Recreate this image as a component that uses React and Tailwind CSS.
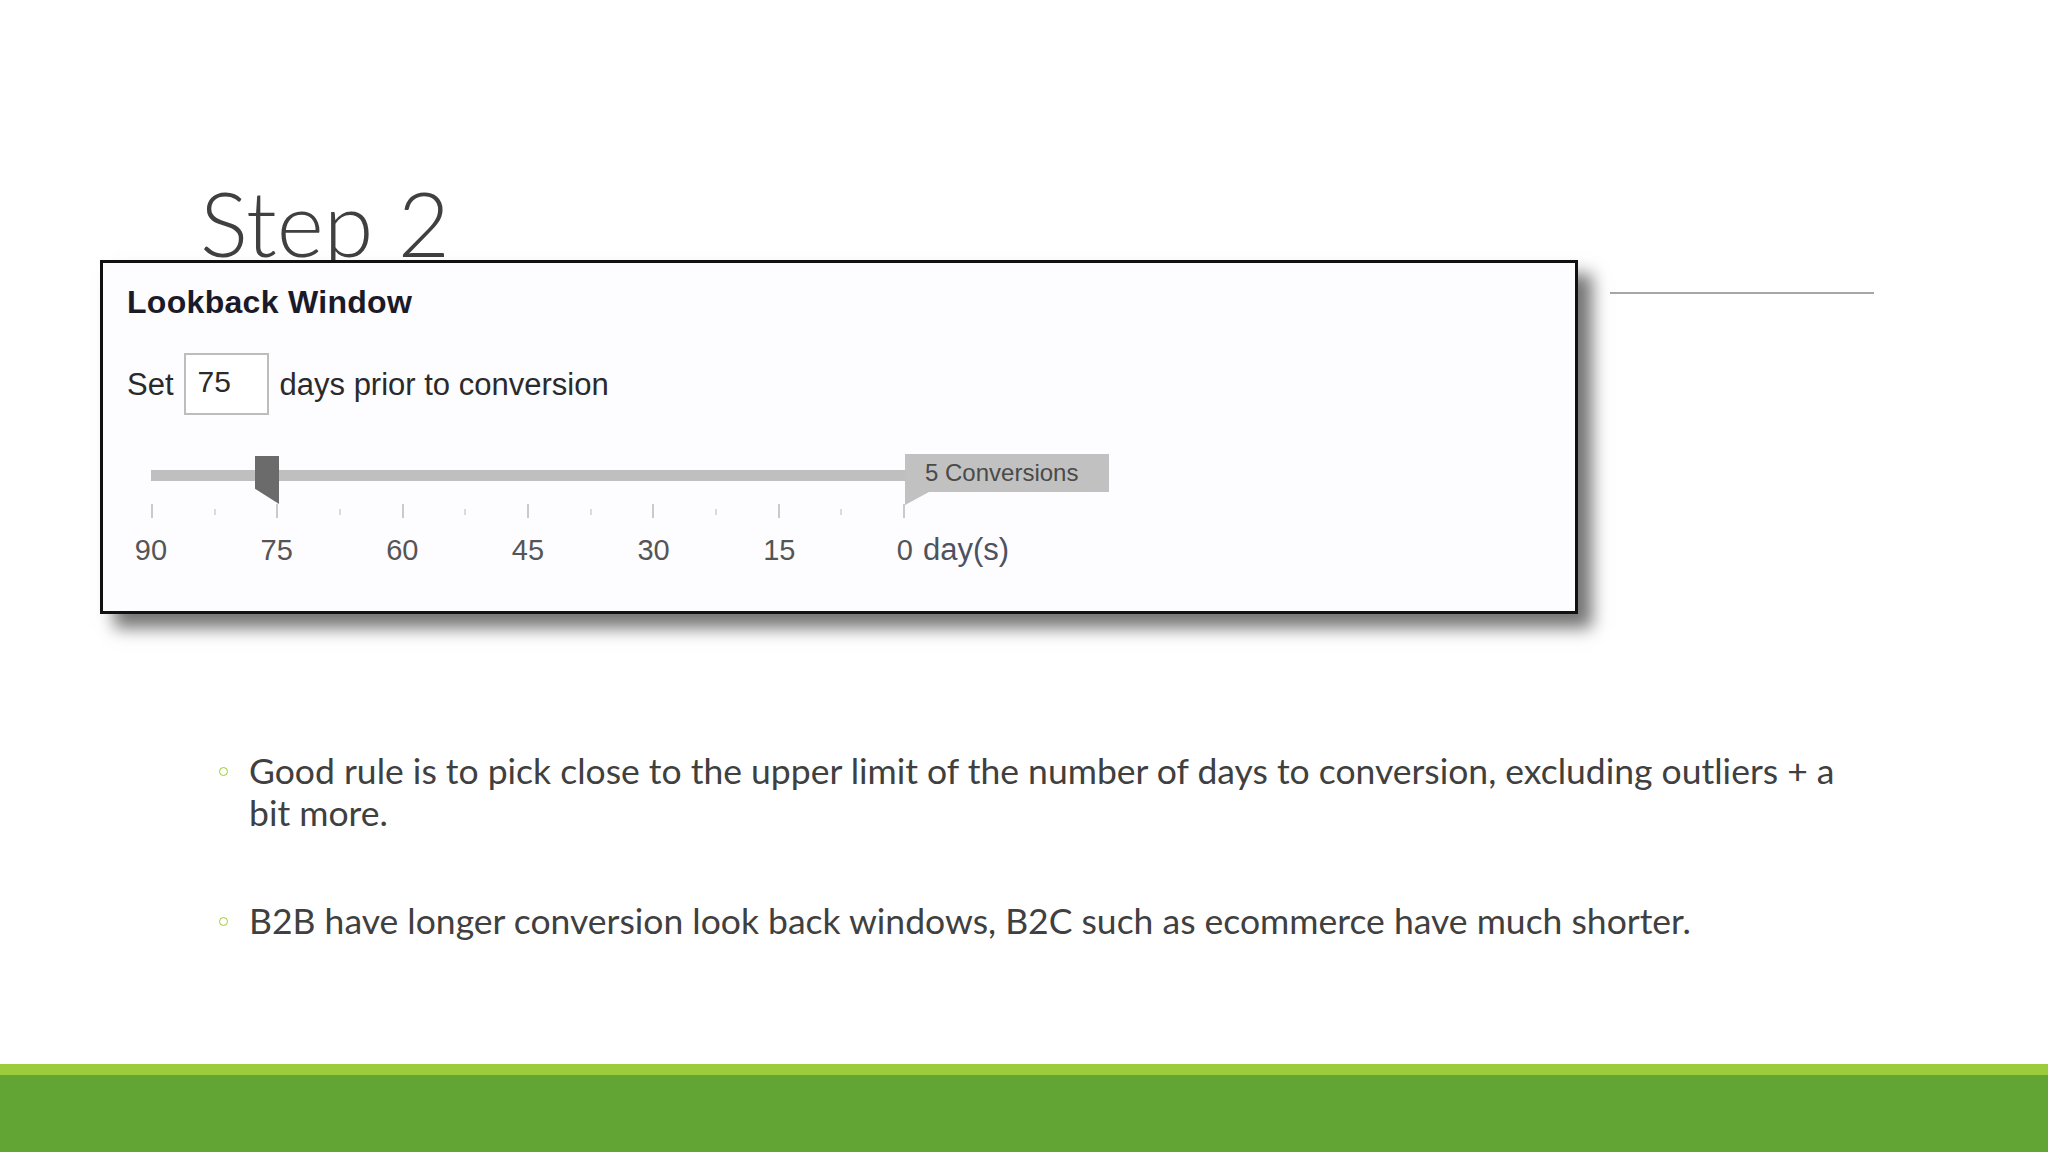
import React from "react";

const ticks = Array.from({ length: 13 }, (_, i) => i % 2 === 0);
const labels = ["90", "75", "60", "45", "30", "15"];

const bullets = [
  "Good rule is to pick close to the upper limit of the number of days to conversion, excluding outliers + a bit more.",
  "B2B have longer conversion look back windows, B2C such as ecommerce have much shorter.",
];

const LookbackWindow = () => (
  <div className="relative z-10 ml-[100px] mt-[-34px] w-[1478px] h-[354px] border-[3px] border-[#111] bg-[#fdfcfe] shadow-[14px_14px_16px_rgba(0,0,0,0.55)] font-['Liberation_Sans',Arial,sans-serif]">
    <div className="pl-[24px] pt-[21px] text-[32px] leading-[36px] font-bold tracking-[0.3px] text-[#1a1a28]">
      Lookback Window
    </div>

    <div className="flex items-center mt-[33px] pl-[24px] text-[31px] text-[#2a2a2a]">
      <span className="pt-[3px]">Set</span>
      <div className="ml-[10px] w-[85px] h-[62px] border-2 border-[#bdbdbd] bg-white flex items-center pl-[12px] pb-[6px] text-[30px]">
        75
      </div>
      <span className="ml-[11px] pt-[3px]">days prior to conversion</span>
    </div>

    <div className="ml-[48px] mt-[41px] w-[754px]">
      <div className="relative h-[48px]">
        <div className="absolute left-0 top-[14px] h-[11px] w-full bg-[#bfbfbf]" />
        <div className="absolute left-[104px] top-0 w-[24px] h-[48px] bg-[#6b6b6b] [clip-path:polygon(0_0,100%_0,100%_100%,0_68%)]" />
        <div className="absolute left-full top-[-2px]">
          <div className="w-[204px] h-[38px] bg-[#c1c1c1] flex items-center pl-[20px] text-[24px] text-[#4a4a4a]">
            5 Conversions
          </div>
          <div className="w-[24px] h-[13px] bg-[#c1c1c1] [clip-path:polygon(0_0,100%_0,0_100%)]" />
        </div>
      </div>

      <div className="flex justify-between items-start h-[14px]">
        {ticks.map((major, i) => (
          <div
            key={i}
            className={
              major
                ? "w-[2px] h-[14px] bg-[#cacaca]"
                : "w-[2px] h-[6px] mt-[5px] bg-[#dadada]"
            }
          />
        ))}
      </div>

      <div className="relative -ml-[30px] w-[814px] mt-[15px] flex justify-between text-[29px] leading-[34px] text-[#555]">
        {labels.map((l) => (
          <span key={l} className="w-[60px] text-center">
            {l}
          </span>
        ))}
        <span className="relative w-[60px] text-center">
          0
          <span className="absolute left-[48px] top-0 whitespace-nowrap text-[31px] text-[#4d5260]">day(s)</span>
        </span>
      </div>
    </div>
  </div>
);

const App = () => {
  return (
    <div className="w-[2048px] h-[1152px] bg-white overflow-hidden flex flex-col">
      <div className="pt-[177px] pl-[200px]">
        <h1 className="text-[90px] leading-none font-light text-[#404040] font-['Lato','Open_Sans',sans-serif]">
          Step 2
        </h1>
        <div className="mt-[25px] ml-[1410px] h-[2px] w-[264px] bg-[#a6a6a6]" />
      </div>

      <LookbackWindow />

      <ul className="mt-[136px] pl-[249px] w-[1862px] font-['Lato','Open_Sans',sans-serif] text-[35.5px] leading-[42px] text-[#404040]">
        {bullets.map((b, i) => (
          <li key={i} className={`relative ${i > 0 ? "mt-[66px]" : ""}`}>
            <span className="absolute left-[-30px] top-[17px] w-[9px] h-[9px] rounded-full border-[1.5px] border-[#9ccb3b]" />
            {b}
          </li>
        ))}
      </ul>

      <div className="mt-auto">
        <div className="h-[11px] bg-[#9ccb3b]" />
        <div className="h-[77px] bg-[#62a534]" />
      </div>
    </div>
  );
};

export default App;
